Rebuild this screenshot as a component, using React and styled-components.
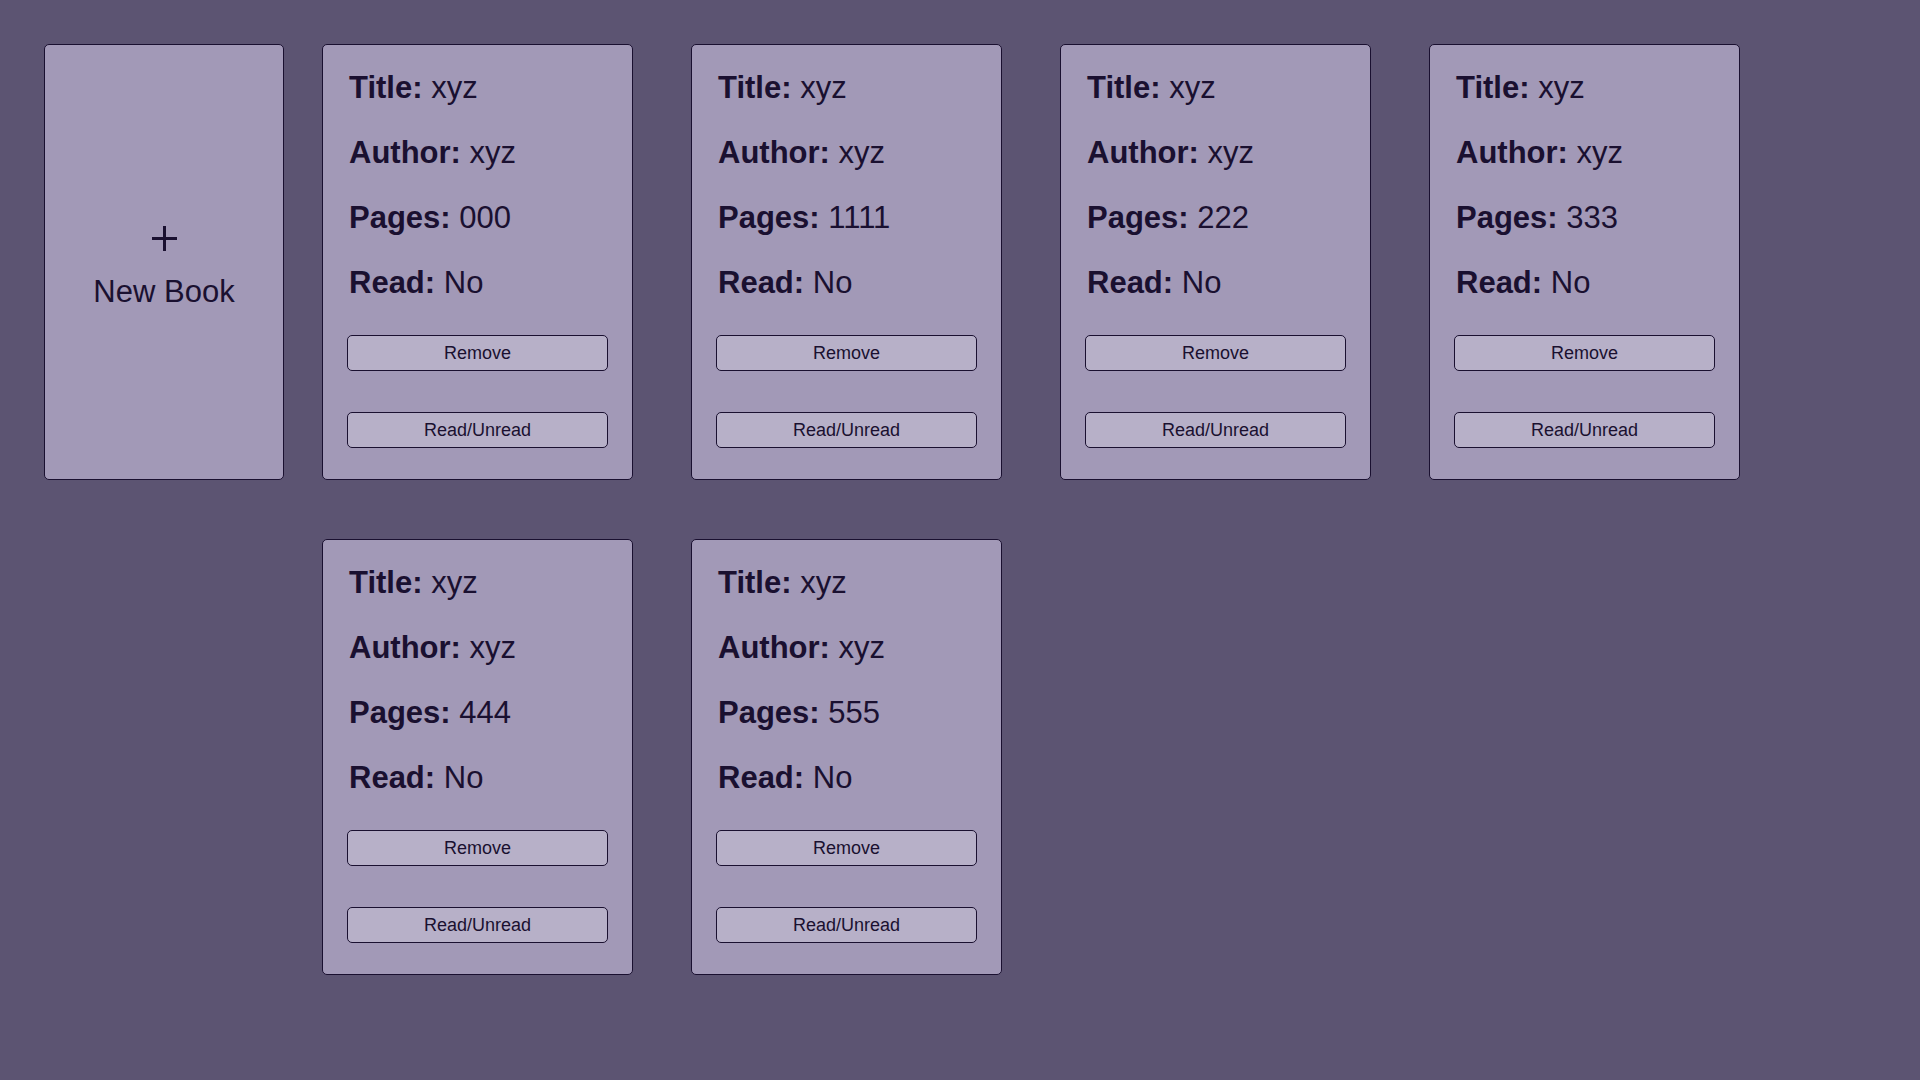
import styled, { createGlobalStyle } from "styled-components";

const books = [
  { title: "xyz", author: "xyz", pages: "000", read: false },
  { title: "xyz", author: "xyz", pages: "1111", read: false },
  { title: "xyz", author: "xyz", pages: "222", read: false },
  { title: "xyz", author: "xyz", pages: "333", read: false },
  { title: "xyz", author: "xyz", pages: "444", read: false },
  { title: "xyz", author: "xyz", pages: "555", read: false },
];

export default function App() {
  return (
    <>
      <GlobalStyle />
      <Page>
        <NewBookCard>
          <PlusIcon width="25" height="25" viewBox="0 0 25 25">
            <path d="M12.5 0v25M0 12.5h25" stroke="#1a1030" strokeWidth="3" />
          </PlusIcon>
          <NewBookLabel>New Book</NewBookLabel>
        </NewBookCard>
        <Library>
          {books.map((book, i) => (
            <BookCard key={i}>
              <Field><b>Title:</b> {book.title}</Field>
              <Field><b>Author:</b> {book.author}</Field>
              <Field><b>Pages:</b> {book.pages}</Field>
              <Field><b>Read:</b> {book.read ? "Yes" : "No"}</Field>
              <Actions>
                <Button>Remove</Button>
                <Button>Read/Unread</Button>
              </Actions>
            </BookCard>
          ))}
        </Library>
      </Page>
    </>
  );
}

const GlobalStyle = createGlobalStyle`
  * {
    box-sizing: border-box;
  }
  html, body {
    margin: 0;
    min-height: 100%;
    background: #5c5472;
  }
  body {
    font-family: "Liberation Sans", Arial, sans-serif;
    color: #1a1030;
    min-height: 1080px;
  }
`;

const Page = styled.div`
  display: flex;
  align-items: flex-start;
  gap: 38px;
  padding: 44px;
`;

const NewBookCard = styled.div`
  width: 240px;
  height: 436px;
  padding-top: 10px;
  background: #a299b7;
  border: 1px solid #1a1030;
  border-radius: 5px;
  display: flex;
  flex-direction: column;
  align-items: center;
  justify-content: center;
  gap: 24px;
  cursor: pointer;
`;

const PlusIcon = styled.svg`
  display: block;
`;

const NewBookLabel = styled.span`
  font-size: 31px;
  line-height: 34px;
`;

const Library = styled.div`
  display: grid;
  grid-template-columns: repeat(4, 311px);
  column-gap: 58px;
  row-gap: 59px;
`;

const BookCard = styled.div`
  height: 436px;
  background: #a299b7;
  border: 1px solid #1a1030;
  border-radius: 5px;
  padding: 26px 24px 31px;
  display: flex;
  flex-direction: column;
  gap: 30.5px;
`;

const Field = styled.p`
  margin: 0;
  font-size: 31px;
  line-height: 34.5px;
  padding-left: 2px;
  white-space: nowrap;

  b {
    font-weight: 700;
  }
`;

const Actions = styled.div`
  margin-top: 4px;
  display: flex;
  flex-direction: column;
  gap: 41px;
`;

const Button = styled.button`
  width: 100%;
  height: 36px;
  background: #b7b0c8;
  border: 1px solid #1a1030;
  border-radius: 5px;
  font-family: "Liberation Sans", Arial, sans-serif;
  font-size: 18px;
  color: #1a1030;
  cursor: pointer;
`;
